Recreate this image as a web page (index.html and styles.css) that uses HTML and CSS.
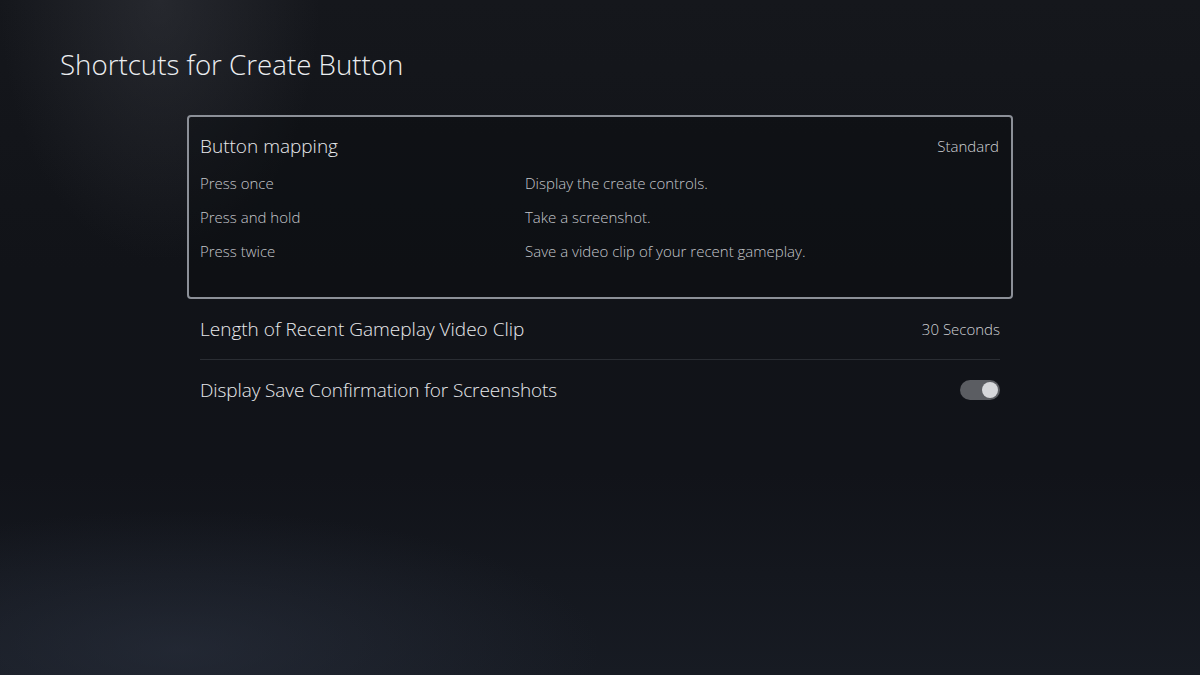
FILE: index.html
```html
<!DOCTYPE html>
<html lang="en">
<head>
<meta charset="utf-8">
<title>Shortcuts for Create Button</title>
<link rel="stylesheet" href="styles.css">
</head>
<body>
<div class="screen">
  <h1 class="title">Shortcuts for Create Button</h1>
  <div class="list">
    <div class="card">
      <div class="card-head">
        <span class="item-label">Button mapping</span>
        <span class="item-value">Standard</span>
      </div>
      <div class="map-table">
        <span class="map-key">Press once</span><span class="map-val">Display the create controls.</span>
        <span class="map-key">Press and hold</span><span class="map-val">Take a screenshot.</span>
        <span class="map-key">Press twice</span><span class="map-val">Save a video clip of your recent gameplay.</span>
      </div>
    </div>
    <div class="row row-divided">
      <span class="item-label">Length of Recent Gameplay Video Clip</span>
      <span class="item-value">30 Seconds</span>
    </div>
    <div class="row">
      <span class="item-label item-label-tight">Display Save Confirmation for Screenshots</span>
      <span class="toggle"><span class="knob"></span></span>
    </div>
  </div>
</div>
</body>
</html>
```

FILE: styles.css
```css
html, body {
  margin: 0;
  padding: 0;
}
body {
  width: 1200px;
  height: 675px;
  overflow: hidden;
  font-family: "Open Sans", "Noto Sans", sans-serif;
  font-weight: 300;
  color: #e6e7ea;
  background-color: #111318;
  background-image:
    radial-gradient(ellipse 420px 140px at 180px 650px, rgba(46, 53, 68, 0.5), rgba(46, 53, 68, 0) 100%),
    radial-gradient(ellipse 160px 260px at 160px 0px, rgba(70, 72, 80, 0.35), rgba(70, 72, 80, 0) 100%),
    linear-gradient(180deg, #15171c 0%, #111318 40%, #111319 70%, #171b23 100%);
}
.screen {
  padding: 44px 0 0 60px;
}
.title {
  margin: 0;
  font-size: 27.7px;
  font-weight: 300;
  line-height: 40px;
  color: #eceef1;
}
.list {
  width: 826px;
  margin: 31px 0 0 127px;
}
.card {
  box-sizing: border-box;
  height: 184px;
  border: 2px solid #8c9098;
  border-radius: 4px;
  padding: 15px 12px 0 11px;
  background: rgba(10, 11, 14, 0.35);
}
.card-head {
  display: flex;
  justify-content: space-between;
  align-items: center;
  height: 28px;
}
.item-label {
  font-size: 19px;
  color: #e8e9ec;
}
.item-label-tight {
  letter-spacing: -0.1px;
}
.item-value {
  font-size: 15px;
  color: #cfd1d5;
}
.map-table {
  display: grid;
  grid-template-columns: 325px 1fr;
  grid-auto-rows: 34px;
  margin-top: 6px;
  font-size: 15px;
  color: #c4c6cb;
  line-height: 34px;
}
.row {
  display: flex;
  justify-content: space-between;
  align-items: center;
  height: 60px;
  margin: 0 13px;
}
.row-divided {
  border-bottom: 1px solid #2a2d33;
}
.toggle {
  position: relative;
  width: 40px;
  height: 20px;
  border-radius: 10px;
  background: #5b5d62;
}
.knob {
  position: absolute;
  right: 2px;
  top: 2px;
  width: 16px;
  height: 16px;
  border-radius: 50%;
  background: #d6d7da;
}
```
